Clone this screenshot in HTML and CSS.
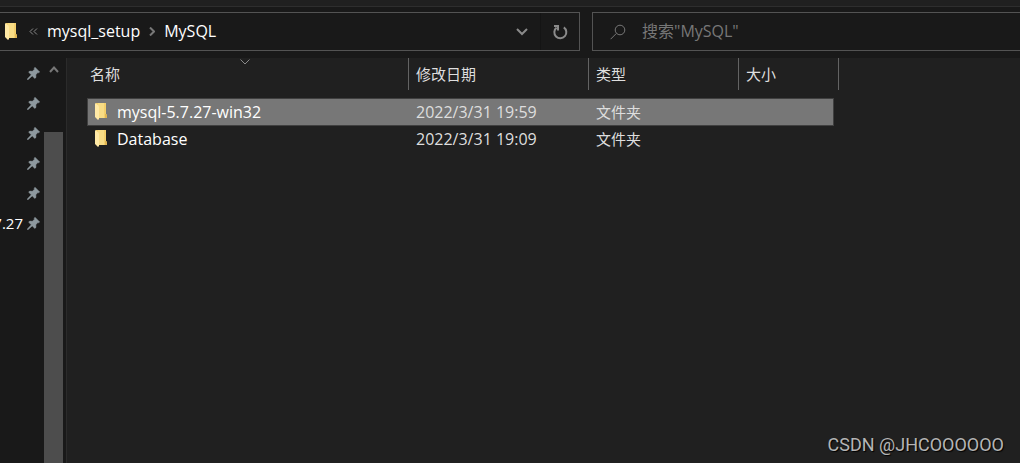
FILE: index.html
```html
<!DOCTYPE html>
<html lang="zh-CN">
<head>
<meta charset="utf-8">
<title>MySQL</title>
<link rel="stylesheet" href="styles.css">
</head>
<body>
<svg class="defs" aria-hidden="true">
  <symbol id="folder" viewBox="0 0 12 17">
    <path fill="#f3cf6c" d="M1 0H11V11L12 12V15H1z"/>
    <path fill="#f8dc85" d="M3 0H9V15H3z"/>
    <path fill="#ffe9a6" d="M0 0L3 2L4 4V16L3 17L0 14z"/>
    <path fill="#e0b552" d="M10 11h1l1 1v3h-2z"/>
  </symbol>
  <symbol id="pin" viewBox="0 0 13 13">
    <path fill="#8e999f" stroke="#8e999f" stroke-width=".5" d="M8 .3L12.7 5L11.6 5.8L10.9 5.4L8.8 7.8L9 10.4L7.8 11.4L5.2 8.9L1.2 12.6L.3 12.7L.5 11.8L4.3 7.8L1.6 5.2L2.7 4.1L5.3 4.3L7.5 2.2L7.2 1.3z"/>
  </symbol>
</svg>
<div class="window">
  <div class="ribbon"></div>
  <header class="toolbar">
    <nav class="address" aria-label="路径">
      <svg class="folder"><use href="#folder"/></svg>
      <button class="more" aria-label="上级"><svg width="9" height="7" viewBox="0 0 9 7"><path d="M4 .5L1 3.5L4 6.5M8 .5L5 3.5L8 6.5"/></svg></button>
      <a class="crumb" href="#">mysql_setup</a>
      <svg class="sep" width="6" height="9" viewBox="0 0 6 9"><path d="M1 .5L5 4.5L1 8.5"/></svg>
      <a class="crumb" href="#">MySQL</a>
      <button class="drop" aria-label="历史记录"><svg width="12" height="8" viewBox="0 0 12 8"><path d="M1 1L6 6L11 1"/></svg></button>
      <button class="refresh" aria-label="刷新"><svg width="16" height="16" viewBox="0 0 16 16"><path d="M11.8 3.4A6 6 0 1 1 4.6 3.6M2 2H6V6.4"/></svg></button>
    </nav>
    <label class="search">
      <svg width="16" height="16" viewBox="0 0 16 16"><circle cx="10" cy="6" r="4.8"/><path d="M6.4 9.4L.6 15.2"/></svg>
      <input type="text" placeholder="搜索&quot;MySQL&quot;" aria-label="搜索">
    </label>
  </header>
  <div class="body">
    <aside class="sidebar">
      <ul class="pins">
        <li><svg><use href="#pin"/></svg></li>
        <li><svg><use href="#pin"/></svg></li>
        <li><svg><use href="#pin"/></svg></li>
        <li><svg><use href="#pin"/></svg></li>
        <li><svg><use href="#pin"/></svg></li>
        <li><span>7.27</span><svg><use href="#pin"/></svg></li>
      </ul>
      <div class="scroll">
        <button aria-label="向上滚动"><svg width="10" height="7" viewBox="0 0 10 7"><path d="M1 6L5 1.5L9 6"/></svg></button>
        <div class="thumb"></div>
      </div>
    </aside>
    <main class="files">
      <table>
        <thead>
          <tr>
            <th>名称<svg class="sort" width="10" height="6" viewBox="0 0 10 6"><path d="M.5 .5L5 5L9.5 .5"/></svg></th>
            <th>修改日期</th><th>类型</th><th>大小</th>
          </tr>
        </thead>
        <tbody>
          <tr class="selected"><td><svg class="folder"><use href="#folder"/></svg>mysql-5.7.27-win32</td><td class="date">2022/3/31 19:59</td><td>文件夹</td><td></td></tr>
          <tr><td><svg class="folder"><use href="#folder"/></svg>Database</td><td class="date">2022/3/31 19:09</td><td>文件夹</td><td></td></tr>
        </tbody>
      </table>
      <div class="watermark">CSDN @JHCOOOOOO</div>
    </main>
  </div>
</div>
</body>
</html>
```
FILE: styles.css
```css
* { box-sizing: border-box; }
body {
  margin: 0;
  background: #191919;
  color: #fff;
  font: 15px/20px "Open Sans", "Noto Sans CJK SC", sans-serif;
}
button { padding: 0; border: 0; background: none; display: flex; align-items: center; justify-content: center; }
svg { flex: none; fill: none; stroke: #8a8a8a; display: block; }
.defs { position: absolute; width: 0; height: 0; }
.window { min-height: 100vh; display: flex; flex-direction: column; overflow: hidden; }
.ribbon { height: 7px; background: #202020; border-bottom: 1px solid #2e2e2e; }
.folder { width: 12px; height: 17px; stroke: none; }

.toolbar { display: grid; grid-template-columns: 580px 1fr; gap: 12px; padding: 5px 0 7px; font-size: 16px; }
.address, .search { height: 39px; border: 1px solid #535353; display: flex; align-items: center; }
.address { border-left: 0; padding-left: 5px; }
.more { margin: 0 9px 0 12px; }
.crumb { color: #fff; text-decoration: none; padding-bottom: 2px; }
.sep { margin: 0 9px 0 9px; stroke-width: 2; stroke: #777; }
.drop { width: 36px; height: 37px; margin-left: auto; }
.drop svg { stroke-width: 2; }
.refresh { width: 39px; height: 37px; border-left: 1px solid #141414; }
.refresh svg { stroke-width: 2; }
.search { border-right: 0; padding-left: 17px; gap: 16px; }
.search svg { stroke: #777; }
.search input { flex: 1; min-width: 0; border: 0; padding: 0 0 2px; outline: 0; background: none; color: #fff; font: inherit; }
.search input::placeholder { color: #777; opacity: 1; }

.body { flex: 1; display: grid; grid-template-columns: 66px 1fr; }
.sidebar { display: grid; grid-template-columns: 44px 19px; }
.pins { list-style: none; margin: 0; padding: 0; overflow: hidden; }
.pins li { height: 30px; display: flex; align-items: center; justify-content: flex-end; gap: 4px; padding-right: 4px; }
.pins svg { width: 13px; height: 13px; stroke: none; }
.scroll { display: flex; flex-direction: column; }
.scroll button { height: 22px; margin-bottom: 52px; }
.scroll button svg { stroke-width: 2; stroke: #777; }
.thumb { flex: 1; background: #4d4d4d; }

.files { display: flex; flex-direction: column; background: #202020; border-left: 1px solid #2b2b2b; padding-left: 20px; }
table { display: block; width: 752px; max-width: 100%; }
thead, tbody { display: block; }
tr { display: grid; grid-template-columns: 322px 180px 150px 1fr; }
thead tr { margin-bottom: 8px; }
th { position: relative; height: 32px; padding: 6px 0 0 7px; border-right: 1px solid #636363; color: #dedede; font-weight: 400; text-align: left; }
th:first-child { padding-left: 3px; }
.sort { position: absolute; top: 1px; left: 153px; }
tbody tr { height: 26px; margin-right: 5px; border: 1px solid transparent; }
tbody .selected { height: 28px; background: #777; border-color: #404040; }
td { display: flex; align-items: center; padding: 0 0 0 6px; color: #dedede; }
td:first-child { gap: 10px; padding-left: 7px; color: #fff; font-size: 16px; }
.date { font-size: 16px; }
td .folder { margin-bottom: 2px; }
.watermark { margin: auto 16px 7px auto; color: #b5b5b5; font: 18px/22px Roboto, sans-serif; text-shadow: 1px 1px 1px #000; }
```
